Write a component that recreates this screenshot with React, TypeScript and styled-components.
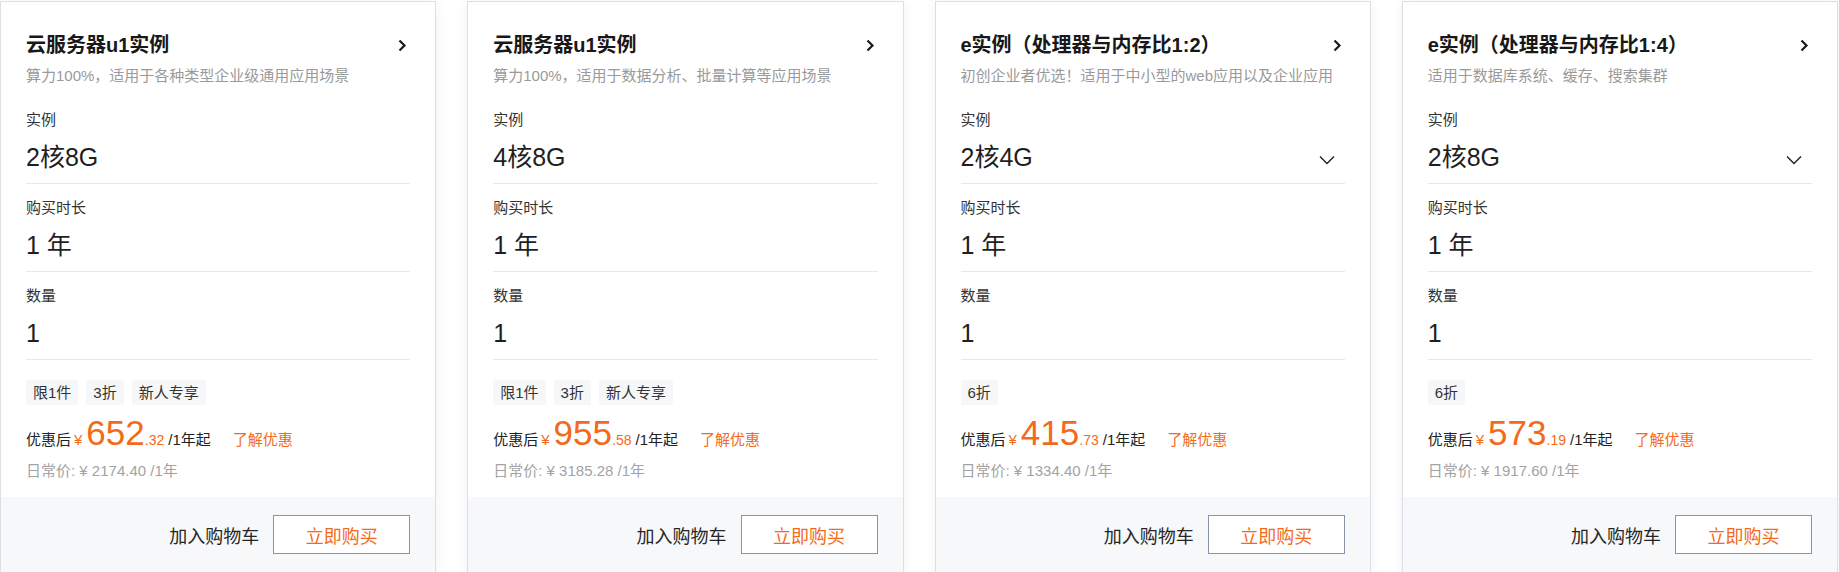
import React from "react";
import styled, { createGlobalStyle } from "styled-components";

const GlobalStyle = createGlobalStyle`
  html, body {
    margin: 0;
    padding: 0;
    background: #ffffff;
  }
  body {
    font-family: "Liberation Sans", "Noto Sans CJK SC", sans-serif;
    color: #333;
  }
`;

const ORANGE = "#f36a1a";

type Product = {
  title: string;
  desc: string;
  spec: string;
  selectable?: boolean;
  tags: string[];
  price: string;
  cents: string;
  original: string;
};

const products: Product[] = [
  {
    title: "云服务器u1实例",
    desc: "算力100%，适用于各种类型企业级通用应用场景",
    spec: "2核8G",
    tags: ["限1件", "3折", "新人专享"],
    price: "652",
    cents: ".32",
    original: "2174.40",
  },
  {
    title: "云服务器u1实例",
    desc: "算力100%，适用于数据分析、批量计算等应用场景",
    spec: "4核8G",
    tags: ["限1件", "3折", "新人专享"],
    price: "955",
    cents: ".58",
    original: "3185.28",
  },
  {
    title: "e实例（处理器与内存比1:2）",
    desc: "初创企业者优选！适用于中小型的web应用以及企业应用",
    spec: "2核4G",
    selectable: true,
    tags: ["6折"],
    price: "415",
    cents: ".73",
    original: "1334.40",
  },
  {
    title: "e实例（处理器与内存比1:4）",
    desc: "适用于数据库系统、缓存、搜索集群",
    spec: "2核8G",
    selectable: true,
    tags: ["6折"],
    price: "573",
    cents: ".19",
    original: "1917.60",
  },
];

const Page = styled.div`
  width: 1838px;
  padding-top: 1px;
  display: grid;
  grid-template-columns: repeat(4, 1fr);
  column-gap: 31px;
`;

const Card = styled.div`
  background: #fff;
  border: 1px solid #dcdfe6;
  box-shadow: 0 2px 12px rgba(30, 40, 80, 0.06);
  display: flex;
  flex-direction: column;
`;

const Body = styled.div`
  padding: 29px 25px 16px 25px;
`;

const TitleRow = styled.div`
  display: flex;
  align-items: center;
  justify-content: space-between;
  height: 28px;
`;

const Title = styled.h3`
  margin: 0;
  font-size: 20px;
  line-height: 28px;
  font-weight: 700;
  color: #181818;
`;

const Desc = styled.p`
  margin: 7px 0 10px;
  font-size: 15px;
  line-height: 20px;
  color: #9a9a9a;
  white-space: nowrap;
`;

const Section = styled.div`
  padding: 13px 0 9px;
  border-bottom: 1px solid #e8e8e8;
`;

const Label = styled.div`
  font-size: 15px;
  line-height: 22px;
  color: #333;
`;

const Value = styled.div`
  margin-top: 9px;
  display: flex;
  align-items: center;
  justify-content: space-between;
  font-size: 25px;
  line-height: 34px;
  color: #1f1f1f;
  padding-right: 10px;

  svg {
    margin-top: 6px;
  }
`;

const Tags = styled.div`
  margin-top: 20px;
  display: flex;
  gap: 8px;
`;

const Tag = styled.span`
  height: 25px;
  line-height: 25px;
  padding: 0 7px;
  font-size: 15px;
  background: #f6f7f9;
  color: #333;
  border-radius: 2px;
`;

const PriceRow = styled.div`
  margin-top: 8px;
  display: flex;
  align-items: baseline;
  height: 40px;
  font-size: 15px;
  color: #222;
  white-space: nowrap;
`;

const Yen = styled.span`
  color: ${ORANGE};
  font-size: 15px;
  margin-left: 3px;
`;

const Big = styled.span`
  color: ${ORANGE};
  font-size: 35px;
  line-height: 40px;
  margin-left: 4px;
`;

const Cents = styled.span`
  color: ${ORANGE};
  font-size: 14px;
`;

const Unit = styled.span`
  margin-left: 4px;
`;

const Learn = styled.a`
  margin-left: 22px;
  color: ${ORANGE};
  text-decoration: none;
  cursor: pointer;
`;

const Original = styled.div`
  margin-top: 8px;
  font-size: 15px;
  line-height: 20px;
  color: #a3a3a3;
`;

const Footer = styled.div`
  background: #f7f8fa;
  padding: 18px 25px 18px;
  display: flex;
  justify-content: flex-end;
  align-items: center;
  gap: 14px;
`;

const CartLink = styled.span`
  font-size: 18px;
  color: #262626;
  cursor: pointer;
`;

const BuyButton = styled.button`
  width: 137px;
  height: 39px;
  border: 1px solid #8a94a8;
  background: #fff;
  color: ${ORANGE};
  font-family: inherit;
  font-size: 18px;
  cursor: pointer;
`;

const ChevronRight = () => (
  <svg width="10" height="13" viewBox="0 0 10 13" style={{ marginRight: 3 }}>
    <path d="M2.5 1.5 L7.5 6.5 L2.5 11.5" fill="none" stroke="#1a1a1a" strokeWidth="2.2" />
  </svg>
);

const ChevronDown = () => (
  <svg width="16" height="10" viewBox="0 0 16 10">
    <path d="M1 1.5 L8 8.5 L15 1.5" fill="none" stroke="#222" strokeWidth="1.4" />
  </svg>
);

const ProductCard = ({ title, desc, spec, selectable, tags, price, cents, original }: Product) => (
  <Card>
    <Body>
      <TitleRow>
        <Title>{title}</Title>
        <ChevronRight />
      </TitleRow>
      <Desc>{desc}</Desc>
      <Section>
        <Label>实例</Label>
        <Value>
          <span>{spec}</span>
          {selectable && <ChevronDown />}
        </Value>
      </Section>
      <Section>
        <Label>购买时长</Label>
        <Value>1 年</Value>
      </Section>
      <Section>
        <Label>数量</Label>
        <Value>1</Value>
      </Section>
      <Tags>
        {tags.map((t) => (
          <Tag key={t}>{t}</Tag>
        ))}
      </Tags>
      <PriceRow>
        <span>优惠后</span>
        <Yen>¥</Yen>
        <Big>{price}</Big>
        <Cents>{cents}</Cents>
        <Unit>/1年起</Unit>
        <Learn>了解优惠</Learn>
      </PriceRow>
      <Original>日常价: ¥ {original} /1年</Original>
    </Body>
    <Footer>
      <CartLink>加入购物车</CartLink>
      <BuyButton>立即购买</BuyButton>
    </Footer>
  </Card>
);

export default function App() {
  return (
    <>
      <GlobalStyle />
      <Page>
        {products.map((p, i) => (
          <ProductCard key={i} {...p} />
        ))}
      </Page>
    </>
  );
}
